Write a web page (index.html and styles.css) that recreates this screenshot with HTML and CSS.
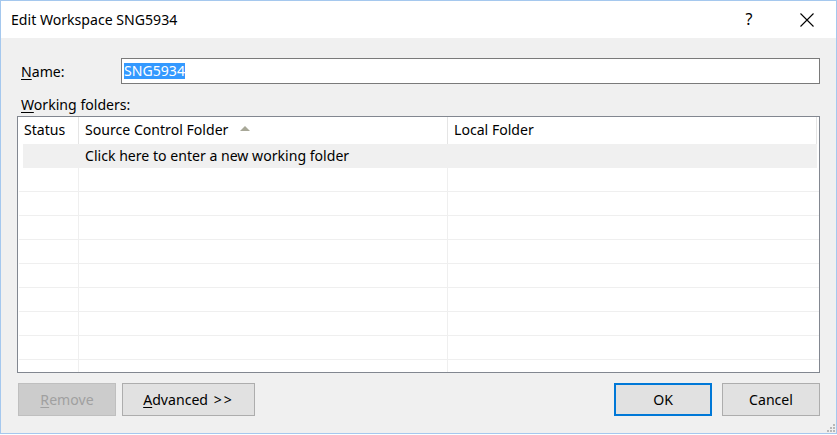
FILE: index.html
```html
<!DOCTYPE html>
<html>
<head>
<meta charset="utf-8">
<link rel="stylesheet" href="styles.css">
</head>
<body>
<div class="window">
  <div class="titlebar">
    <span class="title">Edit Workspace SNG5934</span>
    <div class="caption">
      <span class="cap-btn help">?</span>
      <span class="cap-btn close">
        <svg width="14" height="14" viewBox="0 0 14 14"><path d="M0.5 0.5 L13.5 13.5 M13.5 0.5 L0.5 13.5" stroke="#000" stroke-width="1.1" fill="none"/></svg>
      </span>
    </div>
  </div>
  <div class="content">
    <div class="name-row">
      <label class="name-label"><u>N</u>ame:</label>
      <div class="textbox"><span class="sel">SNG5934</span></div>
    </div>
    <div class="wf-label"><u>W</u>orking folders:</div>
    <div class="grid">
      <div class="grid-head">
        <div class="hcell c-status">Status</div>
        <div class="hcell c-source">Source Control Folder <span class="sort"></span></div>
        <div class="hcell c-local">Local Folder</div>
      </div>
      <div class="grid-body">
        <div class="row new-row">
          <div class="cell c-status"></div>
          <div class="cell c-source">Click here to enter a new working folder</div>
          <div class="cell c-local"></div>
        </div>
        <div class="row"><div class="cell c-status"></div><div class="cell c-source"></div><div class="cell c-local"></div></div>
        <div class="row"><div class="cell c-status"></div><div class="cell c-source"></div><div class="cell c-local"></div></div>
        <div class="row"><div class="cell c-status"></div><div class="cell c-source"></div><div class="cell c-local"></div></div>
        <div class="row"><div class="cell c-status"></div><div class="cell c-source"></div><div class="cell c-local"></div></div>
        <div class="row"><div class="cell c-status"></div><div class="cell c-source"></div><div class="cell c-local"></div></div>
        <div class="row"><div class="cell c-status"></div><div class="cell c-source"></div><div class="cell c-local"></div></div>
        <div class="row"><div class="cell c-status"></div><div class="cell c-source"></div><div class="cell c-local"></div></div>
        <div class="row"><div class="cell c-status"></div><div class="cell c-source"></div><div class="cell c-local"></div></div>
        <div class="row"><div class="cell c-status"></div><div class="cell c-source"></div><div class="cell c-local"></div></div>
      </div>
    </div>
    <div class="buttons">
      <div class="btn-group">
        <button class="btn btn-remove" disabled><u>R</u>emove</button>
        <button class="btn btn-adv"><u>A</u>dvanced <span class="arrows">&gt;&gt;</span></button>
      </div>
      <div class="btn-group right">
        <button class="btn btn-ok">OK</button>
        <button class="btn btn-cancel">Cancel</button>
      </div>
    </div>
    <svg class="grip" width="8" height="8" viewBox="0 0 8 8">
      <rect x="6" y="0" width="2" height="2" fill="#b8b8b8"/>
      <rect x="3" y="3" width="2" height="2" fill="#b8b8b8"/>
      <rect x="6" y="3" width="2" height="2" fill="#b8b8b8"/>
      <rect x="0" y="6" width="2" height="2" fill="#b8b8b8"/>
      <rect x="3" y="6" width="2" height="2" fill="#b8b8b8"/>
      <rect x="6" y="6" width="2" height="2" fill="#b8b8b8"/>
    </svg>
  </div>
</div>
</body>
</html>
```
FILE: styles.css
```css
html, body {
  margin: 0;
  padding: 0;
  background: #ffffff;
}
body {
  font-family: "Noto Sans", "Open Sans", sans-serif;
  font-size: 14.1px;
  color: #000;
}
u { text-decoration: underline; text-underline-offset: 2px; }
.window {
  width: 837px;
  height: 434px;
  box-sizing: border-box;
  border: 1px solid #a5c8ee;
  display: flex;
  flex-direction: column;
  background: #f0f0f0;
}
.titlebar {
  height: 37px;
  background: #fff;
  display: flex;
  align-items: center;
  justify-content: space-between;
  flex-shrink: 0;
}
.title {
  padding-left: 10px;
  line-height: 20px;
}
.caption {
  display: flex;
  height: 100%;
}
.cap-btn {
  width: 58px;
  height: 100%;
  display: flex;
  align-items: center;
  justify-content: center;
}
.help { font-size: 16px; padding-bottom: 2px; box-sizing: border-box; }
.content {
  flex: 1;
  padding: 0 16px;
  display: flex;
  flex-direction: column;
  position: relative;
}
.name-row {
  margin-top: 20px;
  display: flex;
  align-items: center;
  height: 26px;
}
.name-label {
  width: 100px;
  padding-left: 4px;
}
.textbox {
  flex: 1;
  height: 26px;
  box-sizing: border-box;
  border: 1px solid #7a7a7a;
  background: #fff;
  padding-left: 2px;
  display: flex;
  align-items: center;
}
.sel {
  background: #3399ff;
  color: #fff;
  line-height: 16px;
  height: 16px;
}
.wf-label {
  margin-top: 11px;
  line-height: 20px;
  padding-left: 4px;
}
.grid {
  margin-top: 1px;
  height: 257px;
  box-sizing: border-box;
  border: 1px solid #828790;
  background: #fff;
  overflow: hidden;
  display: flex;
  flex-direction: column;
}
.grid-head {
  display: flex;
  height: 27px;
  flex-shrink: 0;
}
.hcell {
  box-sizing: border-box;
  height: 27px;
  line-height: 26px;
  padding-left: 6px;
  border-right: 1px solid #e5e5e5;
  white-space: nowrap;
}
.c-status { width: 61px; }
.c-source { width: 369px; }
.c-local { flex: 1; }
.hcell.c-local { border-right: 1px solid #e5e5e5; margin-right: 2px; }
.sort {
  display: inline-block;
  width: 0;
  height: 0;
  border-left: 5px solid transparent;
  border-right: 5px solid transparent;
  border-bottom: 5px solid #a8a898;
  margin-left: 8px;
  vertical-align: 4px;
}
.grid-body {
  display: flex;
  flex-direction: column;
}
.row {
  display: flex;
  height: 24px;
  box-sizing: border-box;
  border-bottom: 1px solid #efefef;
  margin-left: 1px;
  flex-shrink: 0;
}
.cell {
  box-sizing: border-box;
  border-right: 1px solid #efefef;
  line-height: 23px;
  padding-left: 6px;
  white-space: nowrap;
}
.row .c-status { width: 60px; }
.row .c-local { border-right: none; }
.new-row {
  background: #f0f0f0;
  margin-left: 5px;
  margin-right: 2px;
  border-bottom-color: #f0f0f0;
}
.new-row .cell { border-right: none; }
.new-row .c-status { width: 56px; }
.new-row .c-source { width: 369px; }
.buttons {
  margin-top: 10px;
  display: flex;
  justify-content: space-between;
}
.btn-group {
  display: flex;
  gap: 6px;
  padding-left: 1px;
}
.btn-group.right { gap: 10px; padding-left: 0; }
.btn {
  font-family: "Noto Sans", "Open Sans", sans-serif;
  font-size: 14.1px;
  height: 33px;
  box-sizing: border-box;
  border: 1px solid #adadad;
  background: #e1e1e1;
  color: #000;
  padding: 0;
  margin: 0;
  width: 98px;
}
.arrows { letter-spacing: 2px; margin-left: 2px; }
.btn-remove {
  background: #cccccc;
  border-color: #bfbfbf;
  color: #a0a0a0;
}
.btn-adv { width: 133px; }
.btn-ok { border: 2px solid #0078d7; }
.grip {
  position: absolute;
  right: 1px;
  bottom: 1px;
}
```
